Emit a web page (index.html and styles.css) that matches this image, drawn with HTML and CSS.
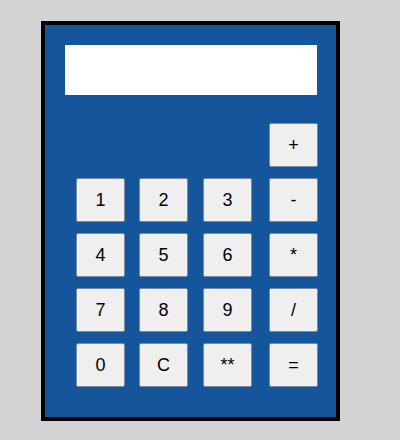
FILE: index.html
```html
<!DOCTYPE html>
<html>
<head>
<meta charset="utf-8">
<link rel="stylesheet" href="styles.css">
</head>
<body>
<div class="calc">
  <div class="display"></div>
  <div class="keys">
    <button class="key op-top">+</button>
    <button class="key">1</button>
    <button class="key">2</button>
    <button class="key">3</button>
    <button class="key">-</button>
    <button class="key">4</button>
    <button class="key">5</button>
    <button class="key">6</button>
    <button class="key">*</button>
    <button class="key">7</button>
    <button class="key">8</button>
    <button class="key">9</button>
    <button class="key">/</button>
    <button class="key">0</button>
    <button class="key">C</button>
    <button class="key">**</button>
    <button class="key">=</button>
  </div>
</div>
</body>
</html>
```
FILE: styles.css
```css
html, body {
  margin: 0;
  padding: 0;
  background: #d3d3d3;
}
body {
  padding: 21px 0 0 41px;
}
.calc {
  box-sizing: border-box;
  width: 299px;
  height: 400px;
  border: 4px solid #000;
  background: #14559b;
  padding: 20px 0 0 20px;
}
.display {
  width: 252px;
  height: 50px;
  background: #fff;
}
.keys {
  margin: 28px 0 0 11px;
  display: grid;
  grid-template-columns: 63px 64px 66px 49px;
  grid-auto-rows: 44px;
  row-gap: 11px;
}
.key {
  box-sizing: border-box;
  width: 49px;
  height: 44px;
  margin: 0;
  padding: 0;
  background: #efefef;
  border: 1px solid #7a8aa0;
  border-radius: 2px;
  font-family: "Liberation Sans", Arial, sans-serif;
  font-size: 18px;
  color: #000;
}
.op-top {
  grid-column: 4;
}
```
